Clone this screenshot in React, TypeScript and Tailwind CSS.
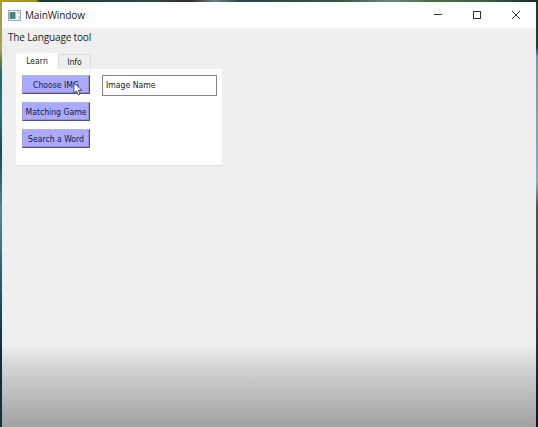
import type { ReactNode } from 'react';

function ActionButton({ children }: { children: ReactNode }) {
  return (
    <button className="flex h-[19px] w-[68px] items-center justify-center whitespace-nowrap border border-t-[#b3b3f3] border-l-[#a0a0ee] border-r-[#4f4f80] border-b-[#4f4f80] bg-[#aaaaff] pt-px text-[#17173d] shadow-[inset_-1px_-1px_#9292d6]">
      {children}
    </button>
  );
}

function TitleBar() {
  return (
    <header className="flex h-[26px] items-center bg-white pl-[6px]">
      <svg width="13" height="11" viewBox="0 0 13 11">
        <rect x="0.5" y="0.5" width="12" height="10" fill="#f4f6f6" stroke="#a3aaab" />
        <rect x="1.5" y="2" width="6" height="7" fill="#498781" />
        <path d="M9 2h2v2M11 6v3" fill="none" stroke="#b5bcbc" />
      </svg>
      <h1 className="ml-1 pt-px font-['Open_Sans',sans-serif] text-[10px] tracking-[-0.12px] text-[#222]">MainWindow</h1>
      <div className="ml-auto flex items-center gap-[31px] pr-[16px]">
        <svg width="8" height="8" viewBox="0 0 8 8" stroke="#333" fill="none"><path d="M0 3.5h8" /></svg>
        <svg width="8" height="8" viewBox="0 0 8 8" stroke="#333" fill="none"><rect x=".5" y=".5" width="7" height="7" /></svg>
        <svg width="8" height="8" viewBox="0 0 8 8" stroke="#333" fill="none"><path d="M0 0l8 8M8 0L0 8" /></svg>
      </div>
    </header>
  );
}

export default function App() {
  return (
    <div className="grid h-[427px] w-[538px] grid-cols-[2px_534px_2px] grid-rows-[2px_425px] overflow-hidden bg-[#335158] font-['DejaVu_Sans_Condensed','DejaVu_Sans',sans-serif] text-[8.6px]">
      <div className="col-span-3 bg-[linear-gradient(90deg,#b49b24_0,#a78d27_36px,#153b36_40px,#254c42_150px,#392b26_190px,#5e8290_215px,#294847_240px,#315b3e_340px,#638b8b_390px,#42733c_430px,#365f42_490px,#122c27_538px)]" />
      <div className="bg-[linear-gradient(#a39a4c_0,#a8a05b_48px,#6b7545_60px,#2c646b_72px,#327077_110px,#1c474e_150px,#5c8791_210px,#204c5c_300px,#152b38_350px,#18303b_425px)]" />
      <main className="relative flex flex-col bg-[#efefef]">
        <TitleBar />
        <div className="relative flex grow flex-col border-x border-[#e4edf2]">
          <p className="h-[18px] pl-[5px] font-['Open_Sans',sans-serif] text-[10px] leading-[18px] tracking-[-0.15px] text-[#222]">The Language tool</p>
          <div className="mt-[7px] ml-[13px] flex h-[16px] items-end text-[#222]">
            <div className="flex h-[16px] w-[42px] shrink-0 items-center justify-center bg-white pt-px">Learn</div>
            <div className="flex h-[15px] w-[33px] items-center justify-center border border-b-0 border-[#dcdcdc]">Info</div>
          </div>
          <section className="ml-[13px] flex h-[97px] w-[206px] gap-[12px] border-b border-[#dfdfdf] bg-white pt-[6px] pl-[6px]">
            <div className="flex flex-col gap-[8px]">
              <ActionButton>Choose IMG</ActionButton>
              <ActionButton>Matching Game</ActionButton>
              <ActionButton>Search a Word</ActionButton>
            </div>
            <div className="flex h-[21px] w-[115px] items-center border border-[#858585] pb-px pl-[3px] text-[#222]">Image Name</div>
          </section>
          <div className="absolute top-[18px] left-[2px] flex flex-col gap-[2px]">
            <i className="size-px bg-[#bbb]" />
            <i className="size-px bg-[#bbb]" />
          </div>
        </div>
        <div className="pointer-events-none absolute inset-x-0 bottom-0 h-[82px] bg-[linear-gradient(#0000_0%,#00000015_18%,#0000002b_45%,#0000003d_70%,#00000053_100%)]" />
        <svg className="absolute top-[80px] left-[71px]" width="10" height="14" viewBox="0 0 10 14">
          <path d="M1 1v10l2.4-2 1.8 4 1.8-.9-1.8-3.8H9z" fill="#fff" stroke="#30303c" strokeWidth=".8" />
        </svg>
      </main>
      <div className="bg-[linear-gradient(#153b2f_0,#164333_45px,#7897a7_55px,#8ba9bd_180px,#3f5c58_205px,#38434a_300px,#0d2034_390px,#0b1828_425px)]" />
    </div>
  );
}
